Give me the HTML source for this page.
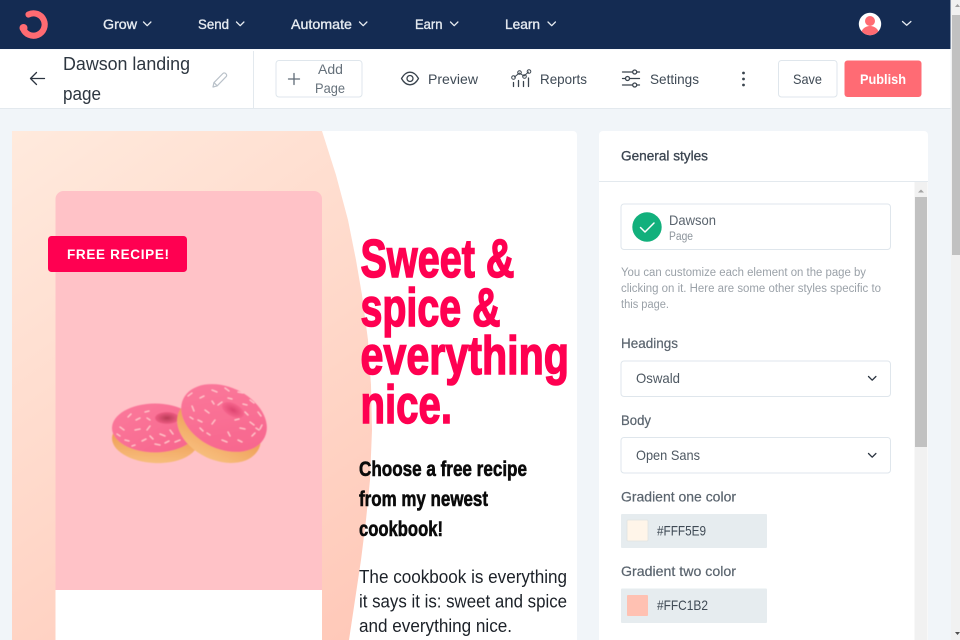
<!DOCTYPE html>
<html>
<head>
<meta charset="utf-8">
<style>
html,body{margin:0;padding:0;width:960px;height:640px;overflow:hidden;background:#f1f5f9}
svg{display:block;filter:blur(.3px)}
text{font-family:"Liberation Sans",Arial,sans-serif}
.nav{font-size:14px;fill:#e6ebf1;stroke:#e6ebf1;stroke-width:.35px}
.tb{font-size:14px;fill:#3f4a55}
.lab{font-size:14px;fill:#5a646e;stroke:#5a646e;stroke-width:.2px}
.hint{font-size:11.5px;fill:#9aa1a8}
.h{font-size:54px;font-weight:bold;fill:#ff0051;stroke:#ff0051;stroke-width:1.5px}
.s{font-size:21.5px;font-weight:bold;fill:#0a0a0a;stroke:#0a0a0a;stroke-width:.6px}
.b{font-size:18px;fill:#1c2128}
.sel{font-size:14px;fill:#4e5862}
.hex{font-size:14px;fill:#3f4a55}
.ch{fill:none;stroke:#e6ebf1;stroke-width:1.3;stroke-linecap:round;stroke-linejoin:round}
.ic{fill:none;stroke:#3a444e;stroke-width:1.3;stroke-linecap:round;stroke-linejoin:round}
.bd{fill:#fff;stroke:#dfe6ec;stroke-width:1}
</style>
</head>
<body>
<svg width="960" height="640" viewBox="0 0 960 640" xmlns="http://www.w3.org/2000/svg">
<defs>
<linearGradient id="peach" gradientUnits="userSpaceOnUse" x1="12" y1="131" x2="372" y2="640">
<stop offset="0" stop-color="#ffeadd"/><stop offset="1" stop-color="#ffc8b8"/>
</linearGradient>
<linearGradient id="dpink" x1="0" y1="0" x2="1" y2="1">
<stop offset="0" stop-color="#fb7a9c"/><stop offset="1" stop-color="#f7648c"/>
</linearGradient>
<linearGradient id="dbase" x1="0" y1="0" x2="0" y2="1">
<stop offset="0" stop-color="#e98a3e"/><stop offset="1" stop-color="#f7bd7c"/>
</linearGradient>
<radialGradient id="hole1"><stop offset="0" stop-color="#b93a55"/><stop offset="1" stop-color="#ef5d84"/></radialGradient>
<radialGradient id="hole2"><stop offset="0" stop-color="#dd4570"/><stop offset="1" stop-color="#f7668e"/></radialGradient>
<filter id="soft"><feGaussianBlur stdDeviation=".5"/></filter>
</defs>

<rect width="960" height="640" fill="#f1f5f9"/>

<!-- outer scrollbar -->
<rect x="951" y="0" width="9" height="640" fill="#f1f1f1"/>
<rect x="952" y="15" width="8" height="240" fill="#c1c1c1"/>
<path d="M955 7l2.5-3 2.5 3z" fill="#a0a0a0"/>
<path d="M955 632l2.5 3 2.5-3z" fill="#505050"/>

<!-- nav -->
<rect x="0" y="0" width="950.5" height="49" fill="#142b52"/>
<path d="M28.500 14.500A11.200 11.200 0 1 1 23 28.500" fill="none" stroke="#ff6b72" stroke-width="6.200" stroke-linecap="round"/>
<circle cx="23.500" cy="28" r="4" fill="#ff6b72"/>
<text class="nav" x="103" y="29" textLength="34" lengthAdjust="spacingAndGlyphs">Grow</text>
<path class="ch" d="M143.500 22l3.700 3.700 3.700-3.700"/>
<text class="nav" x="198" y="29" textLength="31" lengthAdjust="spacingAndGlyphs">Send</text>
<path class="ch" d="M236.500 22l3.700 3.700 3.700-3.700"/>
<text class="nav" x="291" y="29" textLength="61" lengthAdjust="spacingAndGlyphs">Automate</text>
<path class="ch" d="M359.500 22l3.700 3.700 3.700-3.700"/>
<text class="nav" x="415" y="29" textLength="27.500" lengthAdjust="spacingAndGlyphs">Earn</text>
<path class="ch" d="M450.500 22l3.700 3.700 3.700-3.700"/>
<text class="nav" x="505" y="29" textLength="35" lengthAdjust="spacingAndGlyphs">Learn</text>
<path class="ch" d="M548 22l3.700 3.700 3.700-3.700"/>
<circle cx="870" cy="24" r="11.200" fill="#fff"/>
<clipPath id="av"><circle cx="870" cy="24" r="11.200"/></clipPath>
<g clip-path="url(#av)" fill="#ff6b72">
<circle cx="870" cy="21" r="5"/>
<ellipse cx="870" cy="34" rx="9" ry="8"/>
</g>
<path class="ch" d="M902.500 21.500l4.200 3.700 4.200-3.700"/>

<!-- toolbar -->
<rect x="0" y="49.500" width="950.500" height="58.500" fill="#fff"/>
<rect x="0" y="108" width="950.500" height="1" fill="#e3e9ee"/>
<rect x="253" y="51" width="1" height="57" fill="#e3e9ee"/>
<path d="M30.500 78.500H44.500M36.500 72.500l-6 6 6 6" fill="none" stroke="#2b3440" stroke-width="1.300" stroke-linecap="round" stroke-linejoin="round"/>
<text x="63" y="70" font-size="18" fill="#2d3640" textLength="127" lengthAdjust="spacingAndGlyphs">Dawson landing</text>
<text x="63" y="100" font-size="18" fill="#2d3640" textLength="38" lengthAdjust="spacingAndGlyphs">page</text>
<g fill="none" stroke="#b9c1c9" stroke-width="1.200" stroke-linejoin="round">
<path d="M213 87l.9-4.300 9-9.200a1.900 1.900 0 0 1 2.700 0l.5.500a1.900 1.900 0 0 1 0 2.700l-9 9.200z"/>
<path d="M214.200 82.800l3 3"/>
</g>

<rect class="bd" x="276" y="60.500" width="86" height="36.500" rx="3"/>
<path d="M294 73.500v11M288.500 79h11" fill="none" stroke="#5f6b76" stroke-width="1.300" stroke-linecap="round"/>
<text class="tb" style="fill:#66717b" x="318" y="74" textLength="25" lengthAdjust="spacingAndGlyphs">Add</text>
<text class="tb" style="fill:#66717b" x="315" y="93" textLength="30" lengthAdjust="spacingAndGlyphs">Page</text>

<path class="ic" d="M401.500 78.500c2.500-4.500 5.300-6.300 8.500-6.300s6 1.800 8.500 6.300c-2.500 4.500-5.300 6.300-8.500 6.300s-6-1.800-8.500-6.300z"/>
<circle class="ic" cx="410" cy="78.500" r="3"/>
<text class="tb" x="428" y="84" textLength="50" lengthAdjust="spacingAndGlyphs">Preview</text>

<g class="ic">
<path d="M514.500 77l4.800-4 4.700 3 4.500-4" stroke-width="1"/>
<circle cx="513.500" cy="77.500" r="1.800" stroke-width="1"/>
<circle cx="519.500" cy="72.500" r="1.800" stroke-width="1"/>
<circle cx="524.500" cy="76.500" r="1.800" stroke-width="1"/>
<circle cx="529" cy="71.500" r="1.800" stroke-width="1"/>
<path d="M513.500 82.500v4M518.500 80.500v6M523.500 81.500v5M528.500 78v8.500"/>
</g>
<text class="tb" x="540" y="84" textLength="47" lengthAdjust="spacingAndGlyphs">Reports</text>

<g class="ic">
<path d="M622.500 72h10M637 72h2.500M622.500 78.500h2.500M630 78.500h9.500M622.500 85h10M637 85h2.500"/>
<circle cx="634.700" cy="72" r="2"/>
<circle cx="627.500" cy="78.500" r="2"/>
<circle cx="634.700" cy="85" r="2"/>
</g>
<text class="tb" x="650" y="84" textLength="49" lengthAdjust="spacingAndGlyphs">Settings</text>

<g fill="#3a444e"><circle cx="743.500" cy="73" r="1.400"/><circle cx="743.500" cy="79" r="1.400"/><circle cx="743.500" cy="85" r="1.400"/></g>

<rect class="bd" x="778.500" y="60.500" width="58.500" height="36.500" rx="3"/>
<text class="tb" x="793" y="84" textLength="29" lengthAdjust="spacingAndGlyphs">Save</text>
<rect x="844.500" y="60.500" width="77" height="36.500" rx="3" fill="#ff6b74"/>
<text x="860" y="84" font-size="14" font-weight="bold" fill="#fff" textLength="46" lengthAdjust="spacingAndGlyphs">Publish</text>

<!-- preview card -->
<path d="M12 135a4 4 0 0 1 4-4H573a4 4 0 0 1 4 4V640H12z" fill="#fff"/>
<path d="M12 131H322L336 175L348 220L356 260L362 295L368 340L371 385L372 430L370 480L366 520L361 560L355 600L349 640H12z" fill="url(#peach)"/>
<path d="M55.500 199a8 8 0 0 1 8-8H314a8 8 0 0 1 8 8V590H55.500z" fill="#ffc2c7"/>
<rect x="55.500" y="590" width="266.500" height="50" fill="#fff"/>
<rect x="48" y="236" width="139" height="36" rx="3.500" fill="#ff0051"/>
<text x="67" y="259" font-size="13.500" font-weight="bold" fill="#fff" textLength="102" lengthAdjust="spacing">FREE RECIPE!</text>

<!-- donuts -->
<g filter="url(#soft)">
<ellipse cx="155" cy="440" rx="43" ry="23" fill="url(#dbase)" transform="rotate(3 155 440)"/>
<ellipse cx="155" cy="428" rx="43" ry="24.500" fill="url(#dpink)"/>
<ellipse cx="167" cy="418" rx="12" ry="6" fill="url(#hole1)"/>
<ellipse cx="219" cy="430" rx="44" ry="30" fill="url(#dbase)" transform="rotate(25 219 430)"/>
<ellipse cx="224" cy="418" rx="45" ry="31" fill="url(#dpink)" transform="rotate(25 224 418)"/>
<ellipse cx="233" cy="410" rx="12" ry="6.500" fill="url(#hole2)" transform="rotate(28 233 410)"/>
<path d="M120 427l4 3M128 417l3-3M135 430l5-1M125 440l4 1M145 412l4-1M150 426l-3 4M160 434l5 2M170 430l3 4M142 441l4-2M155 444l5 1M175 442l5-2M136 420l4-2M117 434l3 2M165 443l4-2M150 436l3 3M132 446l3-1M147 418l3 2M200 398l4-2M212 390l5 2M225 388l4 3M238 392l5 1M250 400l4 3M258 412l3 4M262 425l-2 4M250 422l4 3M240 428l5 1M228 432l2 4M215 420l-3 4M205 410l4 3M192 406l2 5M198 420l4 2M210 435l-3-2M222 440l5 2M238 440l4 2M252 436l3-3M188 396l4-3M218 405l4-3M245 412l3 3M235 420l4-1M200 428l3 3M212 401l2 3M228 398l4 1M243 404l4 1M256 428l3 2M190 417l3 2" fill="none" stroke="#ffc6cc" stroke-width="1.300" stroke-linecap="round"/>
</g>

<!-- heading -->
<text class="h" x="360.500" y="277" textLength="154" lengthAdjust="spacingAndGlyphs">Sweet &amp;</text>
<text class="h" x="360.500" y="326" textLength="140" lengthAdjust="spacingAndGlyphs">spice &amp;</text>
<text class="h" x="360.500" y="374" textLength="208.500" lengthAdjust="spacingAndGlyphs">everything</text>
<text class="h" x="360.500" y="423" textLength="91.500" lengthAdjust="spacingAndGlyphs">nice.</text>

<text class="s" x="359" y="476" textLength="168" lengthAdjust="spacingAndGlyphs">Choose a free recipe</text>
<text class="s" x="359" y="506" textLength="129" lengthAdjust="spacingAndGlyphs">from my newest</text>
<text class="s" x="359" y="536" textLength="84" lengthAdjust="spacingAndGlyphs">cookbook!</text>

<text class="b" x="359" y="583" textLength="208" lengthAdjust="spacingAndGlyphs">The cookbook is everything</text>
<text class="b" x="359" y="607.500" textLength="208" lengthAdjust="spacingAndGlyphs">it says it is: sweet and spice</text>
<text class="b" x="359" y="632" textLength="153" lengthAdjust="spacingAndGlyphs">and everything nice.</text>

<!-- panel -->
<path d="M599 135a4 4 0 0 1 4-4H924a4 4 0 0 1 4 4V640H599z" fill="#fff"/>
<rect x="599" y="181" width="329" height="1" fill="#e3e9ee"/>
<text x="621" y="160.500" font-size="13.500" fill="#3a4450" stroke="#3a4450" stroke-width=".3" textLength="87" lengthAdjust="spacingAndGlyphs">General styles</text>

<rect x="914.500" y="182" width="13" height="458" fill="#f1f1f1"/>
<rect x="915" y="197" width="12" height="250" fill="#c1c1c1"/>
<path d="M918 192.500l3-3 3 3z" fill="#a3a3a3"/>

<rect class="bd" x="621" y="204" width="269.500" height="45.500" rx="3"/>
<circle cx="647" cy="227" r="14.700" fill="#12b07c"/>
<path d="M640.500 227.500l4.500 4.500 9-9" fill="none" stroke="#fff" stroke-width="1.500" stroke-linecap="round" stroke-linejoin="round"/>
<text x="669" y="225" font-size="14" fill="#5a646e" textLength="47" lengthAdjust="spacingAndGlyphs">Dawson</text>
<text x="669" y="240" font-size="11.500" fill="#8d959c" textLength="24" lengthAdjust="spacingAndGlyphs">Page</text>

<text class="hint" x="621" y="276" textLength="245" lengthAdjust="spacingAndGlyphs">You can customize each element on the page by</text>
<text class="hint" x="621" y="292" textLength="260" lengthAdjust="spacingAndGlyphs">clicking on it. Here are some other styles specific to</text>
<text class="hint" x="621" y="308" textLength="48" lengthAdjust="spacingAndGlyphs">this page.</text>

<text class="lab" x="621" y="348" textLength="57" lengthAdjust="spacingAndGlyphs">Headings</text>
<rect class="bd" x="621" y="361" width="269.500" height="35.500" rx="3"/>
<text class="sel" x="636" y="383" textLength="44" lengthAdjust="spacingAndGlyphs">Oswald</text>
<path d="M868.500 376.500l3.700 3.700 3.700-3.700" fill="none" stroke="#2b3440" stroke-width="1.300" stroke-linecap="round" stroke-linejoin="round"/>

<text class="lab" x="621" y="425" textLength="30" lengthAdjust="spacingAndGlyphs">Body</text>
<rect class="bd" x="621" y="437.500" width="269.500" height="35.500" rx="3"/>
<text class="sel" x="636" y="460" textLength="64" lengthAdjust="spacingAndGlyphs">Open Sans</text>
<path d="M868.500 453.500l3.700 3.700 3.700-3.700" fill="none" stroke="#2b3440" stroke-width="1.300" stroke-linecap="round" stroke-linejoin="round"/>

<text class="lab" x="621" y="501.500" textLength="115" lengthAdjust="spacingAndGlyphs">Gradient one color</text>
<rect x="621" y="514" width="146" height="34" rx="1" fill="#e6ecef"/>
<rect x="627" y="520" width="21" height="21" rx="1" fill="#fff5e9" stroke="#dfe3e2" stroke-width=".8"/>
<text class="hex" x="657" y="535.500" textLength="49" lengthAdjust="spacingAndGlyphs">#FFF5E9</text>

<text class="lab" x="621" y="576" textLength="115" lengthAdjust="spacingAndGlyphs">Gradient two color</text>
<rect x="621" y="588.500" width="146" height="34.500" rx="1" fill="#e6ecef"/>
<rect x="627" y="595" width="21" height="21" rx="1" fill="#ffc1b2"/>
<text class="hex" x="657" y="610" textLength="51" lengthAdjust="spacingAndGlyphs">#FFC1B2</text>
</svg>
</body>
</html>
